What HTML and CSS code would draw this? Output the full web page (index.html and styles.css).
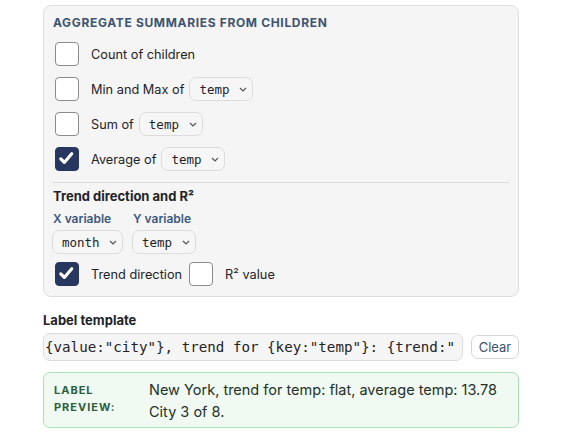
FILE: index.html
```html
<!DOCTYPE html>
<html lang="en">
<head>
    <meta charset="UTF-8">
    <meta name="viewport" content="width=device-width, initial-scale=1.0">
    <title>Label settings</title>
    <link rel="stylesheet" href="styles.css">
</head>
<body>
    <div class="container">
        <div class="panel">
            <h3 class="panel-title">Aggregate summaries from children</h3>

            <label class="check-row">
                <span class="box"></span>
                <span>Count of children</span>
            </label>

            <label class="check-row">
                <span class="box"></span>
                <span>Min and Max of</span>
                <span class="select">
                    <select><option>temp</option></select>
                    <svg viewBox="0 0 8 5"><path d="M1 1l3 3 3-3"/></svg>
                </span>
            </label>

            <label class="check-row">
                <span class="box"></span>
                <span>Sum of</span>
                <span class="select">
                    <select><option>temp</option></select>
                    <svg viewBox="0 0 8 5"><path d="M1 1l3 3 3-3"/></svg>
                </span>
            </label>

            <label class="check-row">
                <span class="box checked">
                    <svg viewBox="0 0 24 24"><path d="M5.5 12.5l4 4 8.5-10"/></svg>
                </span>
                <span>Average of</span>
                <span class="select">
                    <select><option>temp</option></select>
                    <svg viewBox="0 0 8 5"><path d="M1 1l3 3 3-3"/></svg>
                </span>
            </label>

            <hr class="divider">

            <h4 class="sub-title">Trend direction and R²</h4>

            <div class="vars">
                <div class="var">
                    <span class="var-label">X variable</span>
                    <span class="select">
                        <select><option>month</option></select>
                        <svg viewBox="0 0 8 5"><path d="M1 1l3 3 3-3"/></svg>
                    </span>
                </div>
                <div class="var">
                    <span class="var-label">Y variable</span>
                    <span class="select">
                        <select><option>temp</option></select>
                        <svg viewBox="0 0 8 5"><path d="M1 1l3 3 3-3"/></svg>
                    </span>
                </div>
            </div>

            <div class="check-row trend-row">
                <label class="inline-check">
                    <span class="box checked">
                        <svg viewBox="0 0 24 24"><path d="M5.5 12.5l4 4 8.5-10"/></svg>
                    </span>
                    <span>Trend direction</span>
                </label>
                <label class="inline-check">
                    <span class="box"></span>
                    <span>R² value</span>
                </label>
            </div>
        </div>

        <div class="template">
            <label class="sub-title" for="template">Label template</label>
            <div class="template-row">
                <input type="text" id="template" value='{value:"city"}, trend for {key:"temp"}: {trend:"temp"}, average temp: {avg:"temp"}'>
                <button type="button">Clear</button>
            </div>
        </div>

        <div class="preview">
            <div class="preview-label">Label preview:</div>
            <div class="preview-text">
                New York, trend for temp: flat, average temp: 13.78<br>
                City 3 of 8.
            </div>
        </div>
    </div>
</body>
</html>
```

FILE: styles.css
```css
body {
    font-family: 'Inter', 'Liberation Sans', sans-serif;
    background-color: #ffffff;
    color: #1f2328;
    margin: 0;
}

.container {
    width: 476px;
    margin: 5px auto 0;
}

.panel {
    background-color: #f5f5f5;
    border: 1px solid #dedede;
    border-radius: 8px;
    padding: 9px 9px 10px 8px;
}

.panel-title {
    margin: 0 0 11px 1px;
    font-size: 12px;
    line-height: 16px;
    font-weight: 700;
    letter-spacing: 0.055em;
    text-transform: uppercase;
    color: #3d5472;
}

.check-row {
    display: flex;
    align-items: center;
    height: 24px;
    margin-bottom: 11px;
    font-size: 12.75px;
    cursor: pointer;
}

.box {
    width: 24px;
    height: 24px;
    box-sizing: border-box;
    margin: 0 12px 0 3px;
    border: 1.5px solid #8c8c8c;
    border-radius: 4px;
    background-color: #ffffff;
    flex-shrink: 0;
}

.box.checked {
    background-color: #27375f;
    border-color: #27375f;
}

.box svg {
    display: block;
    width: 21px;
    height: 21px;
    fill: none;
    stroke: #ffffff;
    stroke-width: 3.6;
    stroke-linecap: round;
    stroke-linejoin: round;
}

.select {
    position: relative;
    display: inline-block;
    margin-left: 5px;
}

.select select {
    appearance: none;
    font-family: 'DejaVu Sans Mono', monospace;
    font-size: 12.5px;
    color: #1f2328;
    height: 24px;
    padding: 0 22px 0 9px;
    border: 1px solid #dcdcdc;
    border-radius: 7px;
    background-color: #f6f6f6;
}

.select svg {
    position: absolute;
    right: 6px;
    top: 10px;
    width: 8px;
    height: 5px;
    fill: none;
    stroke: #555;
    stroke-width: 1.2;
}

.divider {
    border: none;
    border-top: 1px solid #dddddd;
    margin: 0 0 5px 1px;
}

.sub-title {
    display: block;
    margin: 0;
    font-size: 13px;
    line-height: 16px;
    font-weight: 700;
    color: #1f2328;
}

.panel .sub-title {
    margin-left: 1px;
}

.vars {
    display: flex;
    gap: 9px;
    margin-top: 7px;
}

.var {
    display: flex;
    flex-direction: column;
    gap: 4px;
}

.var-label {
    font-size: 12px;
    line-height: 15px;
    font-weight: 600;
    color: #3b5a80;
    margin-left: 1px;
}

.var .select {
    margin-left: 0;
}

.trend-row {
    margin: 8px 0 0;
}

.inline-check {
    display: flex;
    align-items: center;
}

.inline-check + .inline-check .box {
    margin-left: 7px;
}

.template {
    margin-top: 15px;
}

.template-row {
    display: flex;
    align-items: center;
    gap: 8px;
    margin-top: 5px;
}

.template-row input {
    flex: 1;
    height: 28px;
    box-sizing: border-box;
    padding: 0 8px 0 1px;
    font-family: 'DejaVu Sans Mono', monospace;
    font-size: 14.2px;
    color: #1f2328;
    border: 1px solid #dcdcdc;
    border-radius: 7px;
    background-color: #f5f5f5;
}

button {
    width: 48px;
    height: 24px;
    padding: 0;
    font-family: inherit;
    font-size: 13px;
    color: #3b5270;
    background-color: #ffffff;
    border: 1px solid #d6d6d6;
    border-radius: 7px;
    cursor: pointer;
}

.preview {
    display: flex;
    margin-top: 11px;
    padding: 6px 10px 4px;
    background-color: #f0faf3;
    border: 1px solid #a7e2b2;
    border-radius: 7px;
}

.preview-label {
    width: 95px;
    flex-shrink: 0;
    padding-top: 3px;
    font-size: 11px;
    line-height: 17px;
    font-weight: 700;
    letter-spacing: 0.09em;
    text-transform: uppercase;
    color: #2e5e3c;
}

.preview-text {
    font-size: 14.5px;
    line-height: 22px;
    color: #243028;
}
```
